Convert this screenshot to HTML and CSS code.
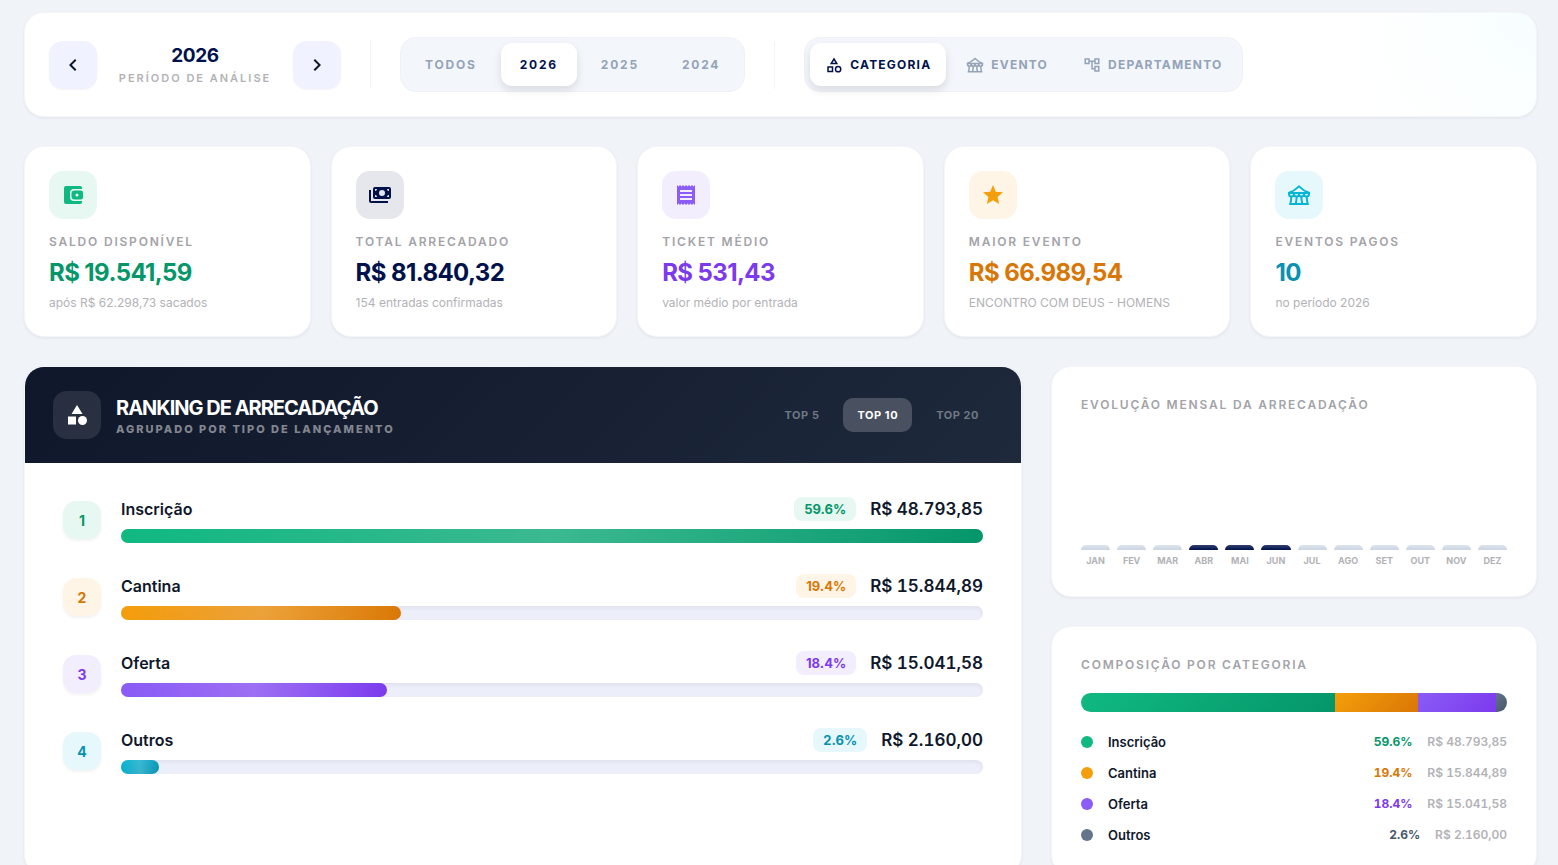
FILE: index.html
```html
<!DOCTYPE html>
<html lang="pt-BR">
<head>
    <meta charset="UTF-8">
    <meta name="viewport" content="width=device-width, initial-scale=1.0">
    <title>Arrecadação 2026</title>
    <link rel="stylesheet" href="styles.css">
</head>
<body>
    <svg class="sprite" aria-hidden="true">
        <symbol id="i-category-outline" viewBox="0 0 24 24"><path d="M12 2l-5.5 9h11L12 2zm0 3.84L13.93 9h-3.87L12 5.84zM17.5 13a4.5 4.5 0 1 0 0 9 4.5 4.5 0 0 0 0-9zm0 7a2.5 2.5 0 0 1 0-5 2.5 2.5 0 0 1 0 5zM3 21.5h8v-8H3v8zm2-6h4v4H5v-4z"/></symbol>
        <symbol id="i-category" viewBox="0 0 24 24"><path d="M12 2l-5.5 9h11zM3 13.5h8v8H3z"/><circle cx="17.5" cy="17.5" r="4.5"/></symbol>
        <symbol id="i-festival" viewBox="0 0 24 24">
            <g fill="none" stroke="currentColor" stroke-width="2">
                <path d="M2 9.8C6 8.6 9.4 5.9 12 3.4c2.6 2.5 6 5.2 10 6.4"/>
                <path d="M2 10h20v1a2.5 2.5 0 0 1-5 0 2.5 2.5 0 0 1-5 0 2.5 2.5 0 0 1-5 0 2.5 2.5 0 0 1-5 0z"/>
                <path d="M4.3 13.5c0 2.5-.3 5-1 7.5h17.4c-.7-2.5-1-5-1-7.5"/>
                <path d="M9.7 13.5c-.1 2.5-.4 5-1 7.5M14.3 13.5c.1 2.5.4 5 1 7.5"/>
            </g>
        </symbol>
        <symbol id="i-tree" viewBox="0 0 24 24"><path d="M22 11V3h-7v3H9V3H2v8h7V8h2v10h4v3h7v-8h-7v3h-2V8h2v3h7zM7 9H4V5h3v4zm10 6h3v4h-3v-4zm0-10h3v4h-3V5z"/></symbol>
        <symbol id="i-wallet" viewBox="0 0 24 24"><path fill-rule="evenodd" d="M21 18v1a2 2 0 0 1-2 2H5a2 2 0 0 1-2-2V5a2 2 0 0 1 2-2h14a2 2 0 0 1 2 2v1h-8a4 4 0 0 0-4 4v4a4 4 0 0 0 4 4zM13.5 7.5h6.5a2 2 0 0 1 2 2v5a2 2 0 0 1-2 2h-6.5a3 3 0 0 1-3-3v-3a3 3 0 0 1 3-3zM16 10.5a1.5 1.5 0 1 0 0 3 1.5 1.5 0 0 0 0-3z"/></symbol>
        <symbol id="i-payments" viewBox="0 0 24 24"><path fill-rule="evenodd" d="M7 4h14a2 2 0 0 1 2 2v8a2 2 0 0 1-2 2H7a2 2 0 0 1-2-2V6a2 2 0 0 1 2-2zm7 3a3 3 0 1 0 0 6 3 3 0 0 0 0-6zM7 6v2a2 2 0 0 0 2-2zm12 0a2 2 0 0 0 2 2V6zM7 12v2h2a2 2 0 0 0-2-2zm14 0a2 2 0 0 0-2 2h2zM1 7h2v11h17v2H3a2 2 0 0 1-2-2z"/></symbol>
        <symbol id="i-receipt" viewBox="0 0 24 24"><path d="M18 17H6v-2h12v2zm0-4H6v-2h12v2zm0-4H6V7h12v2zM3 22l1.5-1.5L6 22l1.5-1.5L9 22l1.5-1.5L12 22l1.5-1.5L15 22l1.5-1.5L18 22l1.5-1.5L21 22V2l-1.5 1.5L18 2l-1.5 1.5L15 2l-1.5 1.5L12 2l-1.5 1.5L9 2 7.5 3.5 6 2 4.5 3.5 3 2v20z"/></symbol>
        <symbol id="i-star" viewBox="0 0 24 24"><path d="M12 17.27L18.18 21l-1.64-7.03L22 9.24l-7.19-.61L12 2 9.19 8.63 2 9.24l5.46 4.73L5.82 21z"/></symbol>
        <symbol id="i-left" viewBox="0 0 24 24"><path d="M15.41 7.41L14 6l-6 6 6 6 1.41-1.41L10.83 12z"/></symbol>
        <symbol id="i-right" viewBox="0 0 24 24"><path d="M10 6L8.59 7.41 13.17 12l-4.58 4.59L10 18l6-6z"/></symbol>
    </svg>

    <main class="page">
        <header class="card topbar">
            <div class="period">
                <button type="button" class="nav-btn" aria-label="Ano anterior"><svg><use href="#i-left"/></svg></button>
                <div class="period-text">
                    <div class="period-year">2026</div>
                    <div class="period-label">PERÍODO DE ANÁLISE</div>
                </div>
                <button type="button" class="nav-btn" aria-label="Próximo ano"><svg><use href="#i-right"/></svg></button>
            </div>
            <div class="divider"></div>
            <div class="segment">
                <button type="button">TODOS</button>
                <button type="button" class="active">2026</button>
                <button type="button">2025</button>
                <button type="button">2024</button>
            </div>
            <div class="divider"></div>
            <div class="segment segment-icons">
                <button type="button" class="active"><svg><use href="#i-category-outline"/></svg>CATEGORIA</button>
                <button type="button"><svg><use href="#i-festival"/></svg>EVENTO</button>
                <button type="button"><svg><use href="#i-tree"/></svg>DEPARTAMENTO</button>
            </div>
        </header>

        <section class="kpis">
            <article class="card kpi green">
                <div class="kpi-icon"><svg><use href="#i-wallet"/></svg></div>
                <div class="kpi-label">SALDO DISPONÍVEL</div>
                <div class="kpi-value">R$ 19.541,59</div>
                <div class="kpi-sub">após R$ 62.298,73 sacados</div>
            </article>
            <article class="card kpi navy">
                <div class="kpi-icon"><svg><use href="#i-payments"/></svg></div>
                <div class="kpi-label">TOTAL ARRECADADO</div>
                <div class="kpi-value">R$ 81.840,32</div>
                <div class="kpi-sub">154 entradas confirmadas</div>
            </article>
            <article class="card kpi purple">
                <div class="kpi-icon"><svg><use href="#i-receipt"/></svg></div>
                <div class="kpi-label">TICKET MÉDIO</div>
                <div class="kpi-value">R$ 531,43</div>
                <div class="kpi-sub">valor médio por entrada</div>
            </article>
            <article class="card kpi orange">
                <div class="kpi-icon"><svg><use href="#i-star"/></svg></div>
                <div class="kpi-label">MAIOR EVENTO</div>
                <div class="kpi-value">R$ 66.989,54</div>
                <div class="kpi-sub">ENCONTRO COM DEUS - HOMENS</div>
            </article>
            <article class="card kpi cyan">
                <div class="kpi-icon"><svg><use href="#i-festival"/></svg></div>
                <div class="kpi-label">EVENTOS PAGOS</div>
                <div class="kpi-value">10</div>
                <div class="kpi-sub">no período 2026</div>
            </article>
        </section>

        <div class="panels">
            <section class="card ranking">
                <div class="ranking-head">
                    <div class="ranking-icon"><svg><use href="#i-category"/></svg></div>
                    <div>
                        <h2>RANKING DE ARRECADAÇÃO</h2>
                        <p>AGRUPADO POR TIPO DE LANÇAMENTO</p>
                    </div>
                    <div class="top-filter">
                        <button type="button">TOP 5</button>
                        <button type="button" class="active">TOP 10</button>
                        <button type="button">TOP 20</button>
                    </div>
                </div>
                <ol class="ranking-list">
                    <li class="rank green">
                        <span class="rank-pos">1</span>
                        <div class="rank-body">
                            <div class="rank-line"><span class="rank-name">Inscrição</span><span class="pill">59.6%</span><span class="rank-total">R$ 48.793,85</span></div>
                            <div class="track"><div class="fill" style="width: 100%"></div></div>
                        </div>
                    </li>
                    <li class="rank orange">
                        <span class="rank-pos">2</span>
                        <div class="rank-body">
                            <div class="rank-line"><span class="rank-name">Cantina</span><span class="pill">19.4%</span><span class="rank-total">R$ 15.844,89</span></div>
                            <div class="track"><div class="fill" style="width: 32.47%"></div></div>
                        </div>
                    </li>
                    <li class="rank purple">
                        <span class="rank-pos">3</span>
                        <div class="rank-body">
                            <div class="rank-line"><span class="rank-name">Oferta</span><span class="pill">18.4%</span><span class="rank-total">R$ 15.041,58</span></div>
                            <div class="track"><div class="fill" style="width: 30.83%"></div></div>
                        </div>
                    </li>
                    <li class="rank cyan">
                        <span class="rank-pos">4</span>
                        <div class="rank-body">
                            <div class="rank-line"><span class="rank-name">Outros</span><span class="pill">2.6%</span><span class="rank-total">R$ 2.160,00</span></div>
                            <div class="track"><div class="fill" style="width: 4.43%"></div></div>
                        </div>
                    </li>
                </ol>
            </section>

            <aside class="side">
                <section class="card side-card">
                    <h3>EVOLUÇÃO MENSAL DA ARRECADAÇÃO</h3>
                    <div class="months">
                        <div class="month"><i></i>JAN</div>
                        <div class="month"><i></i>FEV</div>
                        <div class="month"><i></i>MAR</div>
                        <div class="month on"><i></i>ABR</div>
                        <div class="month on"><i></i>MAI</div>
                        <div class="month on"><i></i>JUN</div>
                        <div class="month"><i></i>JUL</div>
                        <div class="month"><i></i>AGO</div>
                        <div class="month"><i></i>SET</div>
                        <div class="month"><i></i>OUT</div>
                        <div class="month"><i></i>NOV</div>
                        <div class="month"><i></i>DEZ</div>
                    </div>
                </section>

                <section class="card side-card">
                    <h3>COMPOSIÇÃO POR CATEGORIA</h3>
                    <div class="stack">
                        <div class="green" style="width: 59.6%"></div>
                        <div class="orange" style="width: 19.4%"></div>
                        <div class="purple" style="width: 18.4%"></div>
                        <div class="slate" style="width: 2.6%"></div>
                    </div>
                    <ul class="legend">
                        <li class="green"><i></i><span class="legend-name">Inscrição</span><b>59.6%</b><span class="legend-total">R$ 48.793,85</span></li>
                        <li class="orange"><i></i><span class="legend-name">Cantina</span><b>19.4%</b><span class="legend-total">R$ 15.844,89</span></li>
                        <li class="purple"><i></i><span class="legend-name">Oferta</span><b>18.4%</b><span class="legend-total">R$ 15.041,58</span></li>
                        <li class="slate"><i></i><span class="legend-name">Outros</span><b>2.6%</b><span class="legend-total">R$ 2.160,00</span></li>
                    </ul>
                </section>
            </aside>
        </div>
    </main>
</body>
</html>
```

FILE: styles.css
```css
* {
    box-sizing: border-box;
}
body {
    margin: 0;
    font-family: Inter, "Liberation Sans", sans-serif;
    background: #f0f4f9;
    color: #0f172a;
}
h2, h3, p, ol, ul {
    margin: 0;
    padding: 0;
}
ol, ul {
    list-style: none;
}
button {
    font-family: inherit;
    border: none;
    background: none;
    padding: 0;
    cursor: pointer;
}
svg {
    fill: currentColor;
    display: block;
    flex: none;
}
.sprite {
    position: absolute;
    width: 0;
    height: 0;
}

/* colour themes */
.green { --c: #10b981; --d: #059669; --bg: #e7f8f2; }
.navy { --c: #00114b; --d: #00114b; --bg: #e5e7ed; }
.purple { --c: #8b5cf6; --d: #7c3aed; --bg: #f3eefe; }
.orange { --c: #f59e0b; --d: #d97706; --bg: #fef5e7; }
.cyan { --c: #06b6d4; --d: #0891b2; --bg: #e6f8fb; }
.slate { --c: #64748b; --d: #475569; --bg: #eef1f5; }

.page {
    padding: 12px 21px 29px 24px;
    display: flex;
    flex-direction: column;
    gap: 29px;
}
.card {
    background: #fff;
    border: 1px solid #f4f6fa;
    border-radius: 20px;
    box-shadow: 0 1px 3px rgba(15, 23, 42, 0.07);
}

/* top bar */
.topbar {
    display: flex;
    align-items: center;
    gap: 29px;
    padding: 24px;
    background: radial-gradient(circle at 100% 0, #f7feff 0, #fff 190px);
}
.period {
    display: flex;
    align-items: center;
    gap: 20px;
}
.nav-btn {
    width: 48px;
    height: 48px;
    border-radius: 14px;
    background: #f0f2ff;
    color: #0f172a;
    display: flex;
    align-items: center;
    justify-content: center;
    box-shadow: 0 1px 2px rgba(15, 23, 42, 0.05);
}
.nav-btn svg {
    width: 24px;
    height: 24px;
}
.period-text {
    text-align: center;
    min-width: 156px;
}
.period-year {
    font-size: 19px;
    line-height: 26px;
    font-weight: 700;
    letter-spacing: -0.02em;
    color: #00114b;
}
.period-label {
    font-size: 11px;
    line-height: 18px;
    font-weight: 600;
    letter-spacing: 2px;
    color: #b2b2b6;
}
.divider {
    width: 1px;
    height: 48px;
    background: #f1f4f8;
}
.segment {
    display: flex;
    gap: 5px;
    padding: 5px;
    border: 1px solid #eef2f6;
    border-radius: 16px;
    background: #f3f6fa;
}
.segment button {
    display: flex;
    align-items: center;
    gap: 7px;
    height: 43px;
    padding: 0 19px;
    border-radius: 11px;
    font-size: 12px;
    font-weight: 700;
    letter-spacing: 0.15em;
    color: #94a3b8;
}
.segment .active {
    background: #fff;
    color: #00114b;
    box-shadow: 0 4px 8px rgba(15, 23, 42, 0.12);
}
.segment-icons button {
    padding: 0 15px;
    letter-spacing: 0.1em;
}
.segment-icons svg {
    width: 18px;
    height: 18px;
}

/* indicators */
.kpis {
    display: grid;
    grid-template-columns: repeat(5, 1fr);
    gap: 20px;
}
.kpi {
    padding: 24px;
}
.kpi-icon {
    width: 48px;
    height: 48px;
    border-radius: 14px;
    display: flex;
    align-items: center;
    justify-content: center;
    background: var(--bg);
    color: var(--c);
}
.kpi-icon svg {
    width: 24px;
    height: 24px;
}
.kpi-label {
    margin-top: 14px;
    font-size: 12px;
    line-height: 18px;
    font-weight: 600;
    letter-spacing: 0.15em;
    color: #a3a3a8;
}
.kpi-value {
    margin-top: 6px;
    font-size: 24px;
    line-height: 32px;
    font-weight: 700;
    letter-spacing: -0.025em;
    color: var(--d);
}
.kpi-sub {
    margin-top: 5px;
    font-size: 12px;
    line-height: 18px;
    color: #b2b2b6;
}

/* ranking */
.panels {
    display: grid;
    grid-template-columns: minmax(0, 1fr) 486px;
    gap: 29px;
}
.ranking {
    overflow: hidden;
}
.ranking-head {
    display: flex;
    align-items: center;
    gap: 15px;
    padding: 24px 28px;
    background: linear-gradient(135deg, #0f172a, #1e293b);
    color: #fff;
}
.ranking-icon {
    width: 48px;
    height: 48px;
    border-radius: 14px;
    background: rgba(255, 255, 255, 0.1);
    display: flex;
    align-items: center;
    justify-content: center;
}
.ranking-icon svg {
    width: 24px;
    height: 24px;
}
.ranking-head h2 {
    font-size: 20px;
    line-height: 28px;
    font-weight: 700;
    letter-spacing: -1px;
}
.ranking-head p {
    font-size: 11px;
    line-height: 14px;
    font-weight: 800;
    letter-spacing: 2px;
    color: #83868f;
}
.top-filter {
    display: flex;
    gap: 10px;
    margin-left: auto;
}
.top-filter button {
    height: 34px;
    padding: 0 14px;
    border-radius: 10px;
    font-size: 11px;
    font-weight: 700;
    letter-spacing: 0.05em;
    color: #6f7783;
}
.top-filter .active {
    background: #495160;
    color: #fff;
}
.ranking-list {
    padding: 24px 28px;
    display: flex;
    flex-direction: column;
    gap: 11px;
}
.rank {
    display: flex;
    align-items: center;
    gap: 20px;
    padding: 10px;
}
.rank-pos {
    width: 38px;
    height: 38px;
    border-radius: 13px;
    background: var(--bg);
    color: var(--d);
    font-size: 14px;
    font-weight: 700;
    display: flex;
    align-items: center;
    justify-content: center;
    box-shadow: 0 2px 3px rgba(15, 23, 42, 0.05);
}
.rank-body {
    flex: 1;
}
.rank-line {
    display: flex;
    align-items: center;
    margin-bottom: 8px;
    line-height: 24px;
}
.rank-name {
    flex: 1;
    font-size: 16px;
    font-weight: 600;
}
.pill {
    padding: 0 10px;
    margin-right: 14px;
    border-radius: 8px;
    background: var(--bg);
    color: var(--d);
    font-size: 13px;
    font-weight: 700;
}
.rank-total {
    font-size: 17px;
    font-weight: 600;
    font-variant-numeric: tabular-nums;
}
.track {
    height: 14px;
    border-radius: 7px;
    background: #eceefa;
    box-shadow: inset 0 2px 4px rgba(15, 23, 42, 0.06);
}
.fill {
    height: 100%;
    border-radius: 7px;
    background:
        linear-gradient(90deg, transparent, rgba(255, 255, 255, 0.2), transparent),
        linear-gradient(135deg, var(--c), var(--d));
}

/* side column */
.side {
    display: flex;
    flex-direction: column;
    gap: 29px;
}
.side-card {
    padding: 29px;
}
.side-card h3 {
    font-size: 12px;
    line-height: 18px;
    font-weight: 600;
    letter-spacing: 0.15em;
    color: #a3a3a8;
}
.months {
    display: grid;
    grid-template-columns: repeat(12, 1fr);
    gap: 7px;
    align-items: end;
    height: 153px;
}
.month {
    text-align: center;
    font-size: 9px;
    line-height: 12px;
    font-weight: 700;
    color: #b2b2b6;
}
.month i {
    display: block;
    height: 5px;
    margin-bottom: 5px;
    border-radius: 5px 5px 0 0;
    background: linear-gradient(#dde4ed, #cbd5e1);
}
.month.on i {
    background: linear-gradient(#33416f, #00114b);
}
.stack {
    display: flex;
    height: 19px;
    margin: 19px 0 20px;
    border-radius: 10px;
    overflow: hidden;
}
.stack div {
    background: linear-gradient(135deg, var(--c), var(--d));
}
.legend {
    display: flex;
    flex-direction: column;
    gap: 11px;
}
.legend li {
    display: flex;
    align-items: center;
    gap: 15px;
    line-height: 20px;
}
.legend i {
    width: 12px;
    height: 12px;
    border-radius: 50%;
    background: var(--c);
}
.legend-name {
    flex: 1;
    font-size: 13px;
    font-weight: 600;
}
.legend b,
.legend-total {
    font-size: 12px;
    font-variant-numeric: tabular-nums;
}
.legend b {
    font-weight: 700;
    color: var(--d);
}
.legend-total {
    font-weight: 600;
    color: #b2b2b6;
}
```
